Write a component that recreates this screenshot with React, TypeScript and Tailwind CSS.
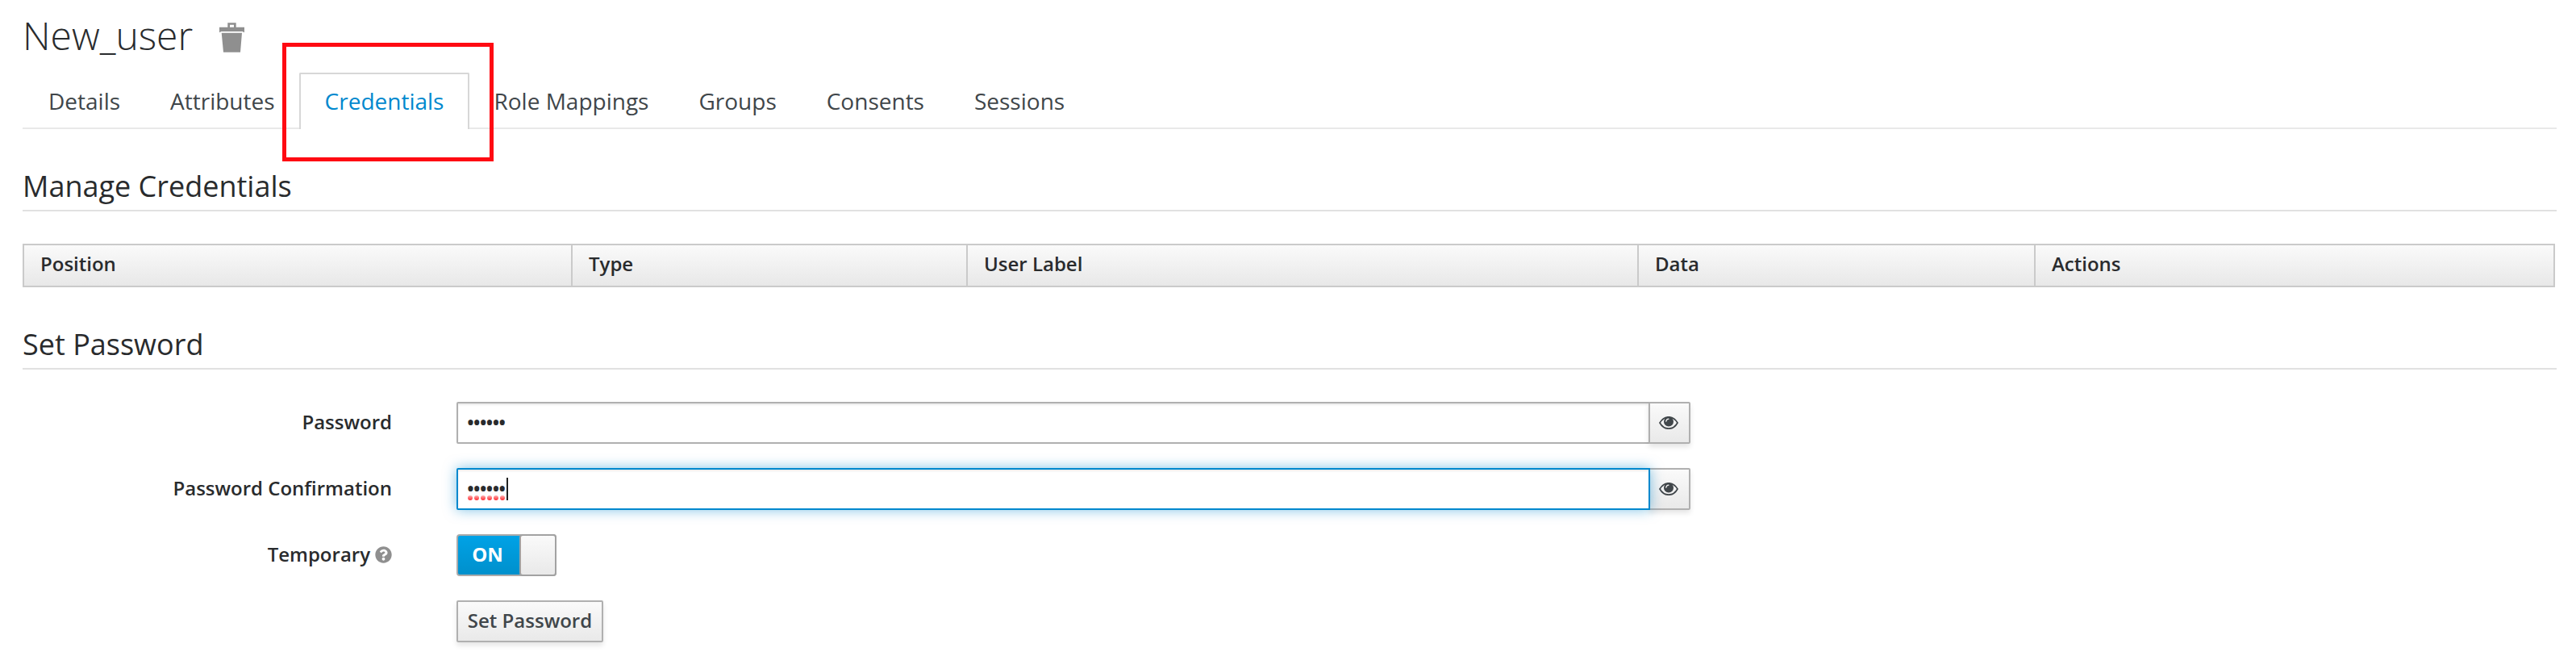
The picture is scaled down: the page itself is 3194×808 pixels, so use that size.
import React from "react";
import { FaQuestionCircle } from "react-icons/fa";

const TABS = ["Details", "Attributes", "Credentials", "Role Mappings", "Groups", "Consents", "Sessions"];

function TrashIcon() {
  return (
    <svg width="31" height="37" viewBox="0 0 31 37" fill="#8f8f8f">
      <path fillRule="evenodd" d="M10.300 5.700V0.300H20.700V5.700H31V12.300L28.500 11H2.500L0 12.300V5.700zM13 5.700H18V2.700H13z" />
      <path d="M2.700 12.700H28L26 36.700H5z" />
    </svg>
  );
}

function Eye() {
  return (
    <svg className="mr-[2px]" width="24" height="16" viewBox="0 0 24 16">
      <path d="M1 8C6.500-1.600 17.500-1.600 23 8C17.500 17.600 6.500 17.600 1 8z" fill="none" stroke="#40464a" strokeWidth="1.700" />
      <circle cx="12" cy="6.500" r="6" fill="#40464a" />
      <path d="M8.800 6.200Q9 3.300 12 3.100" fill="none" stroke="#f1f1f1" strokeWidth="1.200" strokeLinecap="round" />
    </svg>
  );
}

function Legend({ children }: { children: React.ReactNode }) {
  return (
    <h2 className="mr-6 ml-7 h-[50px] border-b-2 border-[#e1e1e1] pt-px text-[36px] leading-[36px] font-normal">{children}</h2>
  );
}

function Row({ label, children }: { label: React.ReactNode; children?: React.ReactNode }) {
  return (
    <div className="mb-[30px] flex h-[52px]">
      <div className="flex w-[486px] justify-end text-[24px] leading-[50px] font-semibold">{label}</div>
      <div className="ml-20 flex">{children}</div>
    </div>
  );
}

function PasswordField({ focused = false }: { focused?: boolean }) {
  return (
    <>
      <div
        className={
          focused
            ? "relative z-10 flex h-[52px] w-[1480px] rounded-l-[2px] border-2 border-[#0088ce] bg-white pl-[10px] shadow-[inset_0_2px_2px_rgba(3,3,3,0.075),0_0_16px_rgba(0,136,206,0.5)]"
            : "flex h-[52px] w-[1480px] rounded-l-[2px] border-2 border-[#b0b0b0] bg-white pl-[10px] shadow-[inset_0_2px_2px_rgba(3,3,3,0.075)]"
        }
      >
        <span className="relative h-[48px] text-[29px] leading-[46px] tracking-[-3.05px]">
          ••••••
          {focused && (
            <svg className="absolute top-[32px] left-[2px]" width="48" height="6" viewBox="0 0 48 6">
              <defs>
                <linearGradient id="misspelt" x1="0" y1="0" x2="0" y2="1">
                  <stop offset="0" stopColor="#ffb0b0" />
                  <stop offset="1" stopColor="#ff2a2f" />
                </linearGradient>
              </defs>
              {[0, 1, 2, 3, 4, 5].map((i) => (
                <circle key={i} cx={3 + i * 8} cy="3" r="3" fill="url(#misspelt)" />
              ))}
            </svg>
          )}
        </span>
        {focused && <span className="mt-[10px] ml-[3px] h-7 w-[2px] bg-[#222]" />}
      </div>
      <button type="button" className="-ml-[2px] flex h-[52px] w-[52px] items-center justify-center rounded-r-[2px] border-2 border-[#b0b0b0] bg-linear-to-b from-[#fafafa] to-[#e9e9e9] shadow-[0_4px_6px_rgba(3,3,3,0.1)]">
        <Eye />
      </button>
    </>
  );
}

export default function App() {
  return (
    <div className="relative h-[808px] w-[3194px] overflow-hidden bg-white font-['Open_Sans',sans-serif] text-[#292b2d]">
      <header className="flex h-[90px] pl-7">
        <h1 className="mt-[18px] w-[244px] text-[48px] leading-[52px] font-light">New_user</h1>
        <div className="mt-7"><TrashIcon /></div>
      </header>
      <nav className="mr-6 ml-7 flex h-[70px] border-b-2 border-[#e9e9e9] text-[28px] leading-[40px] text-[#40464a]">
        {TABS.map((t) => (
          <div
            key={t}
            className={
              t === "Credentials"
                ? "-mr-[2px] h-[70px] rounded-t-[2px] border-2 border-b-0 border-[#d7d7d7] bg-white px-[30px] pt-[13px] text-[#0088ce]"
                : "-mr-[2px] border-2 border-b-0 border-transparent px-[30px] pt-[13px]"
            }
          >
            {t}
          </div>
        ))}
      </nav>
      <div className="h-[52px]" />
      <Legend>Manage Credentials</Legend>
      <div className="mt-10 ml-7 grid h-[54px] w-[3140px] grid-cols-[680px_490px_832px_492px_1fr] border-2 border-[#cacaca] bg-linear-to-b from-[#fafafa] to-[#e8e8e8] text-[24px] leading-[46px] font-semibold">
        <div className="border-r-2 border-[#cacaca] pl-5">Position</div>
        <div className="border-r-2 border-[#cacaca] pl-5">Type</div>
        <div className="border-r-2 border-[#cacaca] pl-5">User Label</div>
        <div className="border-r-2 border-[#cacaca] pl-5">Data</div>
        <div className="pl-5">Actions</div>
      </div>
      <div className="h-[52px]" />
      <Legend>Set Password</Legend>
      <form className="mt-10">
        <Row label="Password"><PasswordField /></Row>
        <Row label="Password Confirmation"><PasswordField focused /></Row>
        <Row label={<>Temporary<FaQuestionCircle className="mt-[15px] ml-[6px] size-[21px] text-[#8f8f8f]" /></>}>
          <div className="flex h-[52px] w-[124px] rounded-[4px] border-2 border-[#aaa] bg-linear-to-b from-[#00a2e6] to-[#0090cc]">
            <span className="w-[76px] pr-[3px] text-center text-[24px] leading-[46px] font-bold text-white">ON</span>
            <span className="-my-[2px] -mr-[2px] flex-1 rounded-[4px] border-2 border-[#a2a2a2] bg-linear-to-b from-[#fafafa] to-[#e9e9e9]" />
          </div>
        </Row>
        <Row label="">
          <button type="button" className="h-[52px] w-[182px] rounded-[2px] border-2 border-[#b0b0b0] bg-linear-to-b from-[#fafafa] to-[#e9e9e9] pb-[2px] text-[24px] leading-[46px] font-semibold text-[#40464a] shadow-[0_4px_6px_rgba(3,3,3,0.1)]">Set Password</button>
        </Row>
      </form>
      <div className="absolute top-[53px] left-[350px] h-[147px] w-[262px] border-[5px] border-[#ff0a12]" />
    </div>
  );
}
